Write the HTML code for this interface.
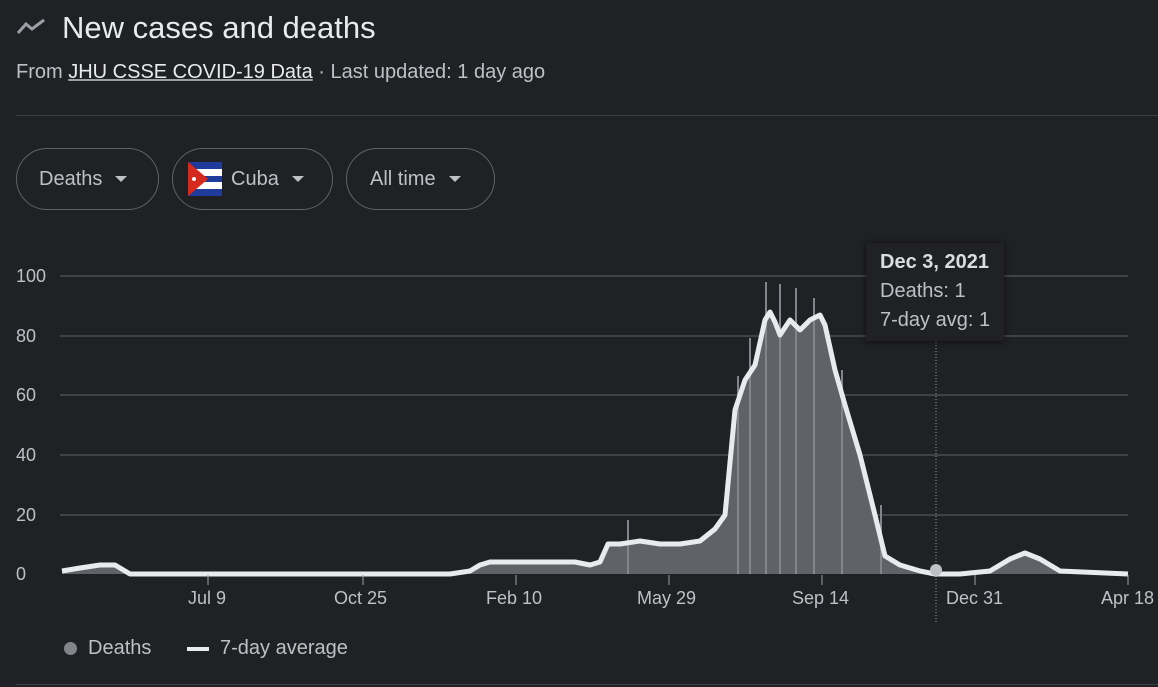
<!DOCTYPE html>
<html><head><meta charset="utf-8"><style>
body{margin:0;background:#202124;width:1158px;height:687px;overflow:hidden;font-family:"Liberation Sans",Arial,sans-serif;color:#e8eaed;position:relative}
.t{position:absolute;left:62px;top:10px;font-size:31px;color:#e8eaed}
.s{position:absolute;left:16px;top:61px;font-size:20px;color:#bdc1c6}
.s u{color:#e8eaed;text-decoration-color:#9aa0a6}
.hr{position:absolute;left:16px;right:0;top:115px;border-top:1px solid #3c4043}
.chip{position:absolute;top:148px;height:62px;border:1px solid #5f6368;border-radius:31px;box-sizing:border-box;font-size:20px;color:#bdc1c6;display:flex;align-items:center}
.chip i{display:inline-block;border-left:6px solid transparent;border-right:6px solid transparent;border-top:6px solid #bdc1c6;margin-left:13px}
.ax{position:absolute;font-size:18px;color:#bdc1c6}
</style></head><body>
<svg style="position:absolute;left:16px;top:17px" width="32" height="20" viewBox="0 0 32 20"><path d="M2 16 L10 7 L16 12 L28 3" fill="none" stroke="#9aa0a6" stroke-width="3"/></svg>
<div class="t">New cases and deaths</div>
<div class="s">From <u>JHU CSSE COVID-19 Data</u> · Last updated: 1 day ago</div>
<div class="hr"></div>
<div class="chip" style="left:16px;width:143px;padding-left:22px">Deaths<i></i></div>
<div class="chip" style="left:172px;width:161px;padding-left:15px"><svg width="34" height="34" viewBox="0 0 34 34" style="margin-right:9px"><rect width="34" height="34" fill="#fff"/><rect y="0" width="34" height="7" fill="#1f3c9c"/><rect y="14" width="34" height="6" fill="#1f3c9c"/><rect y="27" width="34" height="7" fill="#1f3c9c"/><path d="M0 0 L20 17 L0 34Z" fill="#d52b1e"/><circle cx="6" cy="17" r="2" fill="#fff"/></svg>Cuba<i></i></div>
<div class="chip" style="left:346px;width:149px;padding-left:23px">All time<i></i></div>
<svg style="position:absolute;left:0;top:0" width="1158" height="687">
<g stroke="#5f6368" stroke-width="1">
<line x1="60" x2="1128" y1="276" y2="276"/><line x1="60" x2="1128" y1="336" y2="336"/><line x1="60" x2="1128" y1="395" y2="395"/><line x1="60" x2="1128" y1="455" y2="455"/><line x1="60" x2="1128" y1="515" y2="515"/>
</g>
<line x1="936" x2="936" y1="342" y2="622" stroke="#9aa0a6" stroke-dasharray="1,2"/>
<path d="M62 571 L80 568 L100 565 L115 565 L130 574 L450 574 L470 571 L480 565 L490 562 L540 562 L575 562 L590 565 L600 562 L608 544 L620 544 L640 541 L660 544 L680 544 L700 541 L715 529 L725 515 L735 410 L745 380 L755 365 L765 320 L770 312 L775 322 L780 335 L790 320 L800 330 L810 320 L820 315 L825 325 L835 370 L845 405 L860 455 L875 515 L885 556 L900 565 L920 571 L935 574 L960 574 L990 571 L1010 559 L1025 553 L1040 559 L1060 571 L1128 574 L1128 574 L62 574Z" fill="#5f6368"/>
<g stroke="#80868b" stroke-width="2">
<line x1="766" y1="574" x2="766" y2="282"/><line x1="780" y1="574" x2="780" y2="284"/><line x1="796" y1="574" x2="796" y2="288"/><line x1="814" y1="574" x2="814" y2="298"/><line x1="738" y1="574" x2="738" y2="376"/><line x1="750" y1="574" x2="750" y2="338"/><line x1="628" y1="574" x2="628" y2="520"/><line x1="842" y1="574" x2="842" y2="370"/><line x1="881" y1="574" x2="881" y2="505"/>
</g>
<path d="M62 571 L80 568 L100 565 L115 565 L130 574 L450 574 L470 571 L480 565 L490 562 L540 562 L575 562 L590 565 L600 562 L608 544 L620 544 L640 541 L660 544 L680 544 L700 541 L715 529 L725 515 L735 410 L745 380 L755 365 L765 320 L770 312 L775 322 L780 335 L790 320 L800 330 L810 320 L820 315 L825 325 L835 370 L845 405 L860 455 L875 515 L885 556 L900 565 L920 571 L935 574 L960 574 L990 571 L1010 559 L1025 553 L1040 559 L1060 571 L1128 574" fill="none" stroke="#e8eaed" stroke-width="5" stroke-linejoin="round"/>
<circle cx="936" cy="570" r="6" fill="#bdc1c6"/>
<g stroke="#9aa0a6" stroke-width="1"><line x1="208" x2="208" y1="575" y2="585"/><line x1="363" x2="363" y1="575" y2="585"/><line x1="516" x2="516" y1="575" y2="585"/><line x1="669" x2="669" y1="575" y2="585"/><line x1="822" x2="822" y1="575" y2="585"/><line x1="975" x2="975" y1="575" y2="585"/><line x1="1128" x2="1128" y1="575" y2="585"/></g>
</svg>
<div style="position:absolute;left:866px;top:243px;width:138px;height:98px;background:#202124;box-shadow:0 1px 6px rgba(0,0,0,.6)"></div>
<div style="position:absolute;left:880px;top:248px;font-size:20px;line-height:29px;color:#bdc1c6"><b style="color:#dadce0">Dec 3, 2021</b><br>Deaths: 1<br>7-day avg: 1</div>
<div class="ax" style="left:16px;top:266px">100</div>
<div class="ax" style="left:16px;top:326px">80</div>
<div class="ax" style="left:16px;top:385px">60</div>
<div class="ax" style="left:16px;top:445px">40</div>
<div class="ax" style="left:16px;top:505px">20</div>
<div class="ax" style="left:16px;top:564px">0</div>
<div class="ax" style="left:188px;top:588px">Jul 9</div>
<div class="ax" style="left:334px;top:588px">Oct 25</div>
<div class="ax" style="left:486px;top:588px">Feb 10</div>
<div class="ax" style="left:637px;top:588px">May 29</div>
<div class="ax" style="left:792px;top:588px">Sep 14</div>
<div class="ax" style="left:946px;top:588px">Dec 31</div>
<div class="ax" style="left:1101px;top:588px">Apr 18</div>
<div style="position:absolute;left:64px;top:642px;width:13px;height:13px;border-radius:50%;background:#80868b"></div>
<div class="ax" style="left:88px;top:637px;font-size:20px">Deaths</div>
<div style="position:absolute;left:187px;top:647px;width:22px;height:4px;background:#e8eaed"></div>
<div class="ax" style="left:220px;top:637px;font-size:20px">7-day average</div>
<div style="position:absolute;left:16px;right:0;top:684px;border-top:1px solid #3c4043"></div>
</body></html>
